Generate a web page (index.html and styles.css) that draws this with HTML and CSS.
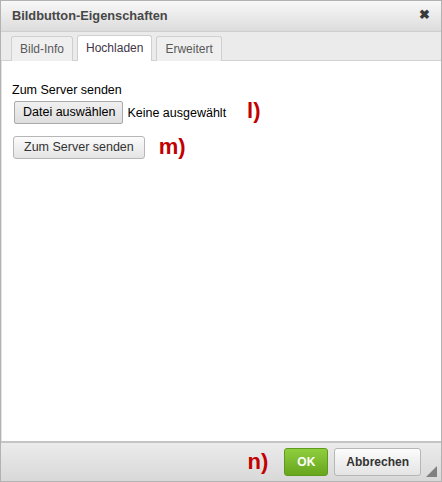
FILE: index.html
```html
<!DOCTYPE html>
<html lang="de">
<head>
    <meta charset="UTF-8">
    <title>Bildbutton-Eigenschaften</title>
    <link rel="stylesheet" href="styles.css">
</head>
<body>
    <div class="dialog">
        <div class="title-bar">
            <span class="title">Bildbutton-Eigenschaften</span>
            <span class="close">&#10006;</span>
        </div>

        <div class="tabs">
            <div class="tab">Bild-Info</div>
            <div class="tab active">Hochladen</div>
            <div class="tab">Erweitert</div>
        </div>

        <div class="content">
            <div class="label">Zum Server senden</div>
            <div class="file-row">
                <span class="file-btn">Datei auswählen</span>
                <span class="file-name">Keine ausgewählt</span>
                <span class="marker marker-l">l)</span>
            </div>
            <div class="upload-row">
                <span class="button">Zum Server senden</span>
                <span class="marker marker-m">m)</span>
            </div>
        </div>

        <div class="footer">
            <span class="marker marker-n">n)</span>
            <span class="button ok">OK</span>
            <span class="button cancel">Abbrechen</span>
            <span class="grip"></span>
        </div>
    </div>
</body>
</html>
```

FILE: styles.css
```css
:root {
    --border: #b2b2b2;
    --line: #d1d1d1;
    --text: #474747;
    --red: #c20000;
}

* {
    box-sizing: border-box;
}

body {
    margin: 0;
    font-family: "Liberation Sans", Arial, sans-serif;
    font-size: 12.5px;
    color: #000;
    background: #fff;
}

.dialog {
    width: 442px;
    height: 482px;
    border: 1px solid var(--border);
    display: flex;
    flex-direction: column;
}

.title-bar {
    height: 31px;
    flex: none;
    display: flex;
    align-items: center;
    justify-content: space-between;
    padding: 0 11px 1px 11px;
    background: linear-gradient(#f8f8f8, #dcdcdc);
    border-bottom: 1px solid #cfcfcf;
}

.title {
    font-weight: bold;
    font-size: 12.8px;
    color: var(--text);
}

.close {
    font-size: 13px;
    font-weight: bold;
    color: #3a3a3a;
    margin-top: -2px;
}

.tabs {
    height: 29px;
    flex: none;
    display: flex;
    align-items: flex-end;
    gap: 4px;
    padding: 0 0 0 10px;
    background: #ebebeb;
    border-bottom: 1px solid var(--line);
}

.tab {
    height: 25px;
    padding: 0 8px;
    line-height: 24px;
    font-size: 12px;
    color: #595959;
    background: #efefef;
    border: 1px solid #cfcfcf;
    border-bottom: none;
    border-radius: 3px 3px 0 0;
    margin-bottom: -1px;
}

.tab.active {
    height: 26px;
    background: #fff;
    color: #3f3548;
}

.content {
    flex: 1;
    padding: 22px 10px 0 10px;
    background: #fff;
    border-left: 1px solid #e4e4e4;
}

.label {
    line-height: 15px;
}

.file-row {
    display: flex;
    align-items: center;
    margin-top: 3px;
    padding-left: 2px;
}

.file-btn {
    height: 23px;
    line-height: 21px;
    padding: 0 7px 0 8px;
    background: linear-gradient(#f0f0f0, #dedede);
    border: 1px solid #a9a9a9;
    border-radius: 2px;
}

.file-name {
    margin-left: 4px;
}

.marker {
    font-weight: bold;
    font-size: 22px;
    color: var(--red);
}

.marker-l {
    margin-left: 21px;
    margin-top: -4px;
}

.upload-row {
    display: flex;
    align-items: center;
    margin-top: 10px;
    padding-left: 1px;
}

.button {
    display: inline-block;
    height: 23px;
    line-height: 21px;
    padding: 0 10px;
    font-size: 12.5px;
    color: #333;
    background: linear-gradient(#fcfcfc, #e4e4e4);
    border: 1px solid #b6b6b6;
    border-radius: 3px;
}

.marker-m {
    margin-left: 14px;
}

.footer {
    height: 40px;
    flex: none;
    display: flex;
    align-items: center;
    justify-content: flex-end;
    padding: 0 20px 1px 0;
    background: linear-gradient(#ebebeb, #d8d8d8);
    border-top: 2px solid #c4c4c4;
    position: relative;
}

.marker-n {
    margin-right: 10px;
}

.footer .button {
    height: 28px;
    line-height: 26px;
    font-size: 12px;
    font-weight: bold;
    margin-left: 6px;
}

.ok {
    padding: 0 12px;
    color: #fff;
    background: linear-gradient(#8fce3e, #67a61d);
    border-color: #5f9a1a;
}

.cancel {
    padding: 0 11px;
    color: #333;
}

.grip {
    position: absolute;
    right: 4px;
    bottom: 4px;
    width: 0;
    height: 0;
    border-left: 11px solid transparent;
    border-bottom: 11px solid #808080;
}
```
